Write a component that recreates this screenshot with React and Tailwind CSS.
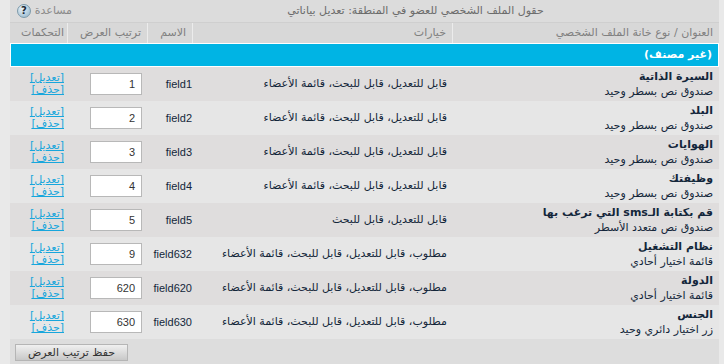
import React from "react";

const rows = [
  { t: "السيرة الذاتية", s: "صندوق نص بسطر وحيد", o: "قابل للتعديل، قابل للبحث، قائمة الأعضاء", n: "field1", v: "1" },
  { t: "البلد", s: "صندوق نص بسطر وحيد", o: "قابل للتعديل، قابل للبحث، قائمة الأعضاء", n: "field2", v: "2" },
  { t: "الهوايات", s: "صندوق نص بسطر وحيد", o: "قابل للتعديل، قابل للبحث، قائمة الأعضاء", n: "field3", v: "3" },
  { t: "وظيفتك", s: "صندوق نص بسطر وحيد", o: "قابل للتعديل، قابل للبحث، قائمة الأعضاء", n: "field4", v: "4" },
  { t: "قم بكتابة الـsms التي ترغب بها", s: "صندوق نص متعدد الأسطر", o: "قابل للتعديل، قابل للبحث", n: "field5", v: "5" },
  { t: "نظام التشغيل", s: "قائمة اختيار أحادي", o: "مطلوب، قابل للتعديل، قابل للبحث، قائمة الأعضاء", n: "field632", v: "9" },
  { t: "الدولة", s: "قائمة اختيار أحادي", o: "مطلوب، قابل للتعديل، قابل للبحث، قائمة الأعضاء", n: "field620", v: "620" },
  { t: "الجنس", s: "زر اختيار دائري وحيد", o: "مطلوب، قابل للتعديل، قابل للبحث، قائمة الأعضاء", n: "field630", v: "630" },
];

const font = { fontFamily: '"DejaVu Sans", Tahoma, sans-serif' };
const latin = { fontFamily: '"Liberation Sans", Arial, sans-serif' };

export default function App() {
  return (
    <div className="w-[724px] h-[364px] bg-[#e9e9e9] pl-[10px] pr-[5px] overflow-hidden text-[11px]" style={font}>
      <div dir="rtl" className="h-full bg-[#dddddd] flex flex-col">
        <div className="h-[23px] shrink-0 flex items-center bg-[#dcdcdc] border-b border-[#cfcfcf] text-[#6b6b6b]">
          <div className="flex-1 text-center pl-[40px]">حقول الملف الشخصي للعضو في المنطقة: تعديل بياناتي</div>
          <div className="flex items-center gap-[4px] pl-[4px] text-[#8a8a8a] w-[62px]">
            <span>مساعدة</span>
            <span className="w-[14px] h-[14px] rounded-full bg-[radial-gradient(circle_at_35%_30%,#e8f2f8,#8fb3c9)] border border-[#7d9aab] flex items-center justify-center text-[10px] font-bold text-[#1b2a36] leading-none">?</span>
          </div>
        </div>
        <div className="grid grid-cols-[266px_260px_45px_80px_58px] h-[21px] shrink-0 bg-[#d8d8d8] text-[#808080] border-b border-white">
          <div className="px-[6px] flex items-center">العنوان / نوع خانة الملف الشخصي</div>
          <div className="px-[6px] flex items-center border-r border-[#ececec]">خيارات</div>
          <div className="px-[6px] flex items-center border-r border-[#ececec]">الاسم</div>
          <div className="px-[6px] flex items-center border-r border-[#ececec]">ترتيب العرض</div>
          <div className="px-[3px] flex items-center border-r border-[#ececec]">التحكمات</div>
        </div>
        <div className="h-[23px] shrink-0 bg-[#00b4e4] border border-white border-t-0 flex items-center px-[6px] text-white font-bold">
          (غير مصنف)
        </div>
        {rows.map((r, i) => (
          <div
            key={i}
            className={`grid grid-cols-[266px_260px_45px_80px_58px] h-[34px] shrink-0 ${i % 2 === 0 ? "bg-[#dfdddd]" : "bg-[#e6e6e6]"} text-[#13263a]`}
          >
            <div className="px-[6px] flex flex-col justify-center leading-[15px]">
              <span className="font-bold">{r.t}</span>
              <span>{r.s}</span>
            </div>
            <div className="px-[6px] flex items-center">{r.o}</div>
            <div className="flex items-center justify-start pr-[1px] text-[11px] whitespace-nowrap" style={latin}>
              <span dir="ltr">{r.n}</span>
            </div>
            <div className="flex items-center justify-start pr-[6px]">
              <div dir="ltr" className="w-[52px] h-[22px] bg-white border border-[#b8b8b8] text-right pr-[6px] text-[11px] text-[#333] leading-[20px]" style={latin}>
                {r.v}
              </div>
            </div>
            <div className="flex flex-col items-start justify-center pr-[4px] leading-[12px] text-[#17a6dc]">
              <span className="underline">[تعديل]</span>
              <span className="underline">[حذف]</span>
            </div>
          </div>
        ))}
        <div dir="ltr" className="flex items-start pt-[5px] pl-[5px]">
          <button className="w-[113px] h-[17px] border border-[#b5b5b5] bg-[linear-gradient(#f0f0f0,#c8c8c8)] text-[#333] text-[11px] leading-none" style={font} dir="rtl">
            حفظ ترتيب العرض
          </button>
        </div>
      </div>
    </div>
  );
}
